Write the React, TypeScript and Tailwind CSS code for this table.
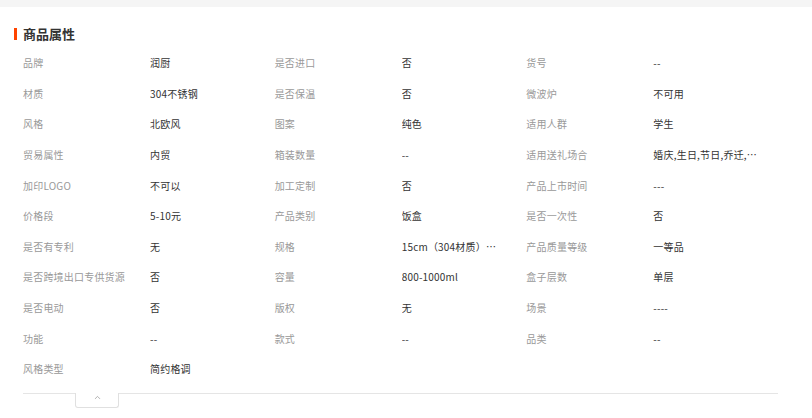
import { ChevronUp } from 'lucide-react'

const ATTRS: [string, string][] = [
  ['品牌', '润厨'],
  ['是否进口', '否'],
  ['货号', '--'],
  ['材质', '304不锈钢'],
  ['是否保温', '否'],
  ['微波炉', '不可用'],
  ['风格', '北欧风'],
  ['图案', '纯色'],
  ['适用人群', '学生'],
  ['贸易属性', '内贸'],
  ['箱装数量', '--'],
  ['适用送礼场合', '婚庆,生日,节日,乔迁,商务馈赠'],
  ['加印LOGO', '不可以'],
  ['加工定制', '否'],
  ['产品上市时间', '---'],
  ['价格段', '5-10元'],
  ['产品类别', '饭盒'],
  ['是否一次性', '否'],
  ['是否有专利', '无'],
  ['规格', '15cm（304材质）蠡状饭盒'],
  ['产品质量等级', '一等品'],
  ['是否跨境出口专供货源', '否'],
  ['容量', '800-1000ml'],
  ['盒子层数', '单层'],
  ['是否电动', '否'],
  ['版权', '无'],
  ['场景', '----'],
  ['功能', '--'],
  ['款式', '--'],
  ['品类', '--'],
  ['风格类型', '简约格调'],
]

export default function App() {
  return (
    <div
      className="w-[812px] h-[418px] bg-white overflow-hidden"
      style={{ fontFamily: '"Noto Sans CJK SC", "Noto Sans", sans-serif' }}
    >
      <div className="h-[7px] bg-[#f5f5f5]" />

      {/* 标题 */}
      <div className="flex items-center h-[14px] mt-[20px] pl-[14px]">
        <span className="w-[3px] h-[12px] bg-[#ff4400]" />
        <span className="ml-[6px] text-[13px] font-bold text-[#333] leading-[14px]">商品属性</span>
      </div>

      <div className="mx-[23px] mt-[7px] w-[755px] grid grid-cols-3">
        {ATTRS.map(([k, v]) => (
          <div key={k} className="flex items-center h-[30.6px] text-[10px] tracking-[0.2px] leading-[14px]">
            <span className="w-[127px] shrink-0 text-[#999] whitespace-nowrap">{k}</span>
            <span className="w-[104px] text-[#333] whitespace-nowrap overflow-hidden text-ellipsis">{v}</span>
          </div>
        ))}
      </div>

      {/* 收起 */}
      <div className="mx-[23px] mt-[8px] w-[755px] border-t border-[#e5e5e5]">
        <button className="ml-[52px] -mt-px w-[44px] h-[15px] bg-white border border-t-0 border-[#e0e0e0] rounded-b-[3px] flex items-center justify-center">
          <ChevronUp size={9} strokeWidth={2} className="text-[#999] -mt-[4px]" />
        </button>
      </div>
    </div>
  )
}
